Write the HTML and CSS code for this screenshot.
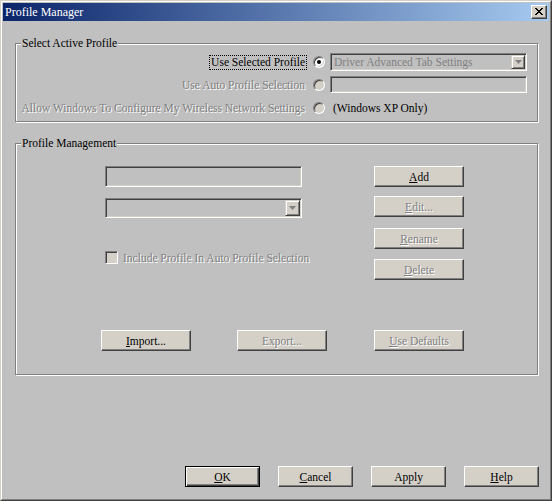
FILE: index.html
```html
<!DOCTYPE html>
<html>
<head>
<meta charset="utf-8">
<title>Profile Manager</title>
<link rel="stylesheet" href="styles.css">
</head>
<body>
<div class="window">
  <div class="frame">
    <div class="titlebar">
      <span class="title">Profile Manager</span>
      <span class="close"><svg width="8" height="7" viewBox="0 0 8 7"><path fill="#000" d="M0 0h2v1h-2zM6 0h2v1h-2zM1 1h2v1h-2zM5 1h2v1h-2zM2 2h4v1h-4zM3 3h2v1h-2zM2 4h4v1h-4zM1 5h2v1h-2zM5 5h2v1h-2zM0 6h2v1h-2zM6 6h2v1h-2z"/></svg></span>
    </div>
    <div class="client">
      <fieldset class="group g1">
        <legend>Select Active Profile</legend>
        <div class="opt-row r1">
          <div class="lbl"><span class="focus">Use Selected Profile</span></div>
          <div class="rcell"><span class="radio on"><span class="dot"></span></span></div>
          <div class="combo c1"><span class="val">Driver Advanced Tab Settings</span><span class="arrow"><svg width="7" height="4" viewBox="0 0 7 4"><path fill="#808080" d="M0 0h7l-3.5 4z"/></svg></span></div>
        </div>
        <div class="opt-row r2">
          <div class="lbl dis">Use Auto Profile Selection</div>
          <div class="rcell"><span class="radio"></span></div>
          <div class="edit e1"></div>
        </div>
        <div class="opt-row r3">
          <div class="lbl dis">Allow Windows To Configure My Wireless Network Settings</div>
          <div class="rcell"><span class="radio"></span></div>
          <div class="note">(Windows XP Only)</div>
        </div>
      </fieldset>

      <fieldset class="group g2">
        <legend>Profile Management</legend>
        <div class="pm-body">
          <div class="pm-left">
            <div class="edit e2"></div>
            <div class="combo c2"><span class="val"></span><span class="arrow"><svg width="7" height="4" viewBox="0 0 7 4"><path fill="#808080" d="M0 0h7l-3.5 4z"/></svg></span></div>
            <div class="check-row"><span class="checkbox"></span><span class="dis">Include Profile In Auto Profile Selection</span></div>
          </div>
          <div class="pm-right">
            <button class="btn b-add"><span><u>A</u>dd</span></button>
            <button class="btn b-edit dis"><span><u>E</u>dit...</span></button>
            <button class="btn b-rename dis"><span><u>R</u>ename</span></button>
            <button class="btn b-delete dis"><span><u>D</u>elete</span></button>
          </div>
        </div>
        <div class="pm-bottom">
          <button class="btn b-import"><span><u>I</u>mport...</span></button>
          <button class="btn b-export dis"><span>Export...</span></button>
          <button class="btn b-defaults dis"><span><u>U</u>se Defaults</span></button>
        </div>
      </fieldset>

      <div class="footer">
        <button class="btn fbtn default"><span><u>O</u>K</span></button>
        <button class="btn fbtn"><span><u>C</u>ancel</span></button>
        <button class="btn fbtn"><span>Apply</span></button>
        <button class="btn fbtn"><span><u>H</u>elp</span></button>
      </div>
    </div>
  </div>
</div>
</body>
</html>
```

FILE: styles.css
```css
* { box-sizing: border-box; }

html, body {
  margin: 0;
  padding: 0;
  background: #c0c0c0;
}

body {
  font-family: "Liberation Serif", "Times New Roman", serif;
  font-size: 11.5px;
  color: #000;
}

.window {
  width: 552px;
  height: 501px;
  border: 1px solid;
  border-color: #d4d0c8 #404040 #404040 #d4d0c8;
  background: #c0c0c0;
}

.frame {
  height: 100%;
  border: 1px solid;
  border-color: #fff #808080 #808080 #fff;
  padding: 1px;
  display: flex;
  flex-direction: column;
}

.titlebar {
  height: 18px;
  flex: none;
  background: linear-gradient(to right, #0a246a, #a6caf0);
  display: flex;
  align-items: center;
  padding: 0 2px 0 2px;
}

.title {
  flex: 1;
  color: #fff;
  font-size: 12px;
  line-height: 18px;
  white-space: nowrap;
}

.close {
  width: 16px;
  height: 14px;
  background: #d4d0c8;
  border: 1px solid;
  border-color: #fff #404040 #404040 #fff;
  box-shadow: inset -1px -1px 0 #808080;
  display: flex;
  align-items: center;
  justify-content: center;
  padding-bottom: 1px;
}

.close svg { display: block; }

.client {
  flex: 1;
  padding: 0 10px 0 12px;
}

.group {
  margin: 0;
  width: 523px;
  min-width: 0;
  border: 1px solid #808080;
  box-shadow: inset 1px 1px 0 #fff, 1px 1px 0 #fff;
}

.group legend {
  margin-left: 5px;
  padding: 0 1px;
  line-height: 13px;
  background: #c0c0c0;
  white-space: nowrap;
}

.g1 {
  margin-top: 16px;
  padding: 3px 0 5px 0;
}

.g2 {
  margin-top: 15px;
  padding: 16px 0 23px 0;
}

/* --- Select Active Profile rows --- */
.opt-row {
  display: flex;
  align-items: center;
}

.r1 { height: 18px; }
.r2 { height: 17px; margin-top: 5px; }
.r3 { height: 17px; margin-top: 6px; }

.lbl {
  width: 291px;
  flex: none;
  text-align: right;
  white-space: nowrap;
  padding-right: 2px;
}

.r1 .lbl { padding-right: 0; }

.focus {
  display: inline-block;
  border: 1px dotted #000;
  padding: 0 1px;
  line-height: 13px;
}

.dis {
  color: #808080;
  text-shadow: 1px 1px 0 #fff;
}

.rcell {
  width: 23px;
  flex: none;
  display: flex;
  align-items: center;
}

.radio {
  width: 12px;
  height: 12px;
  margin-left: 6px;
  border-radius: 50%;
  border: 1px solid;
  border-color: #808080 #fff #fff #808080;
  box-shadow: inset 1px 1px 0 #404040, inset -1px -1px 0 #d4d0c8;
  background: #d4d0c8;
  display: flex;
  align-items: center;
  justify-content: center;
}

.radio.on { background: #fff; }

.dot {
  width: 4px;
  height: 4px;
  border-radius: 50%;
  background: #000;
}

.combo, .edit {
  border: 1px solid;
  border-color: #808080 #fff #fff #808080;
  box-shadow: inset 1px 1px 0 #404040, inset -1px -1px 0 #d4d0c8;
  background: #c0c0c0;
}

.combo {
  display: flex;
  padding: 1px;
}

.combo .val {
  flex: 1;
  padding-left: 2px;
  color: #808080;
  line-height: 14px;
  white-space: nowrap;
}

.combo .arrow {
  flex: none;
  width: 14px;
  background: #d4d0c8;
  border: 1px solid;
  border-color: #d4d0c8 #404040 #404040 #d4d0c8;
  box-shadow: inset 1px 1px 0 #fff, inset -1px -1px 0 #808080;
  display: flex;
  align-items: center;
  justify-content: center;
}

.combo .arrow svg { display: block; }

.c1 { width: 197px; height: 18px; }
.e1 { width: 197px; height: 17px; }

.note {
  margin-left: 3px;
  white-space: nowrap;
}

/* --- Profile Management --- */
.pm-body {
  display: flex;
  align-items: flex-start;
}

.pm-left {
  margin-left: 89px;
  width: 197px;
  flex: none;
}

.e2 { width: 197px; height: 21px; }

.c2 {
  width: 197px;
  height: 20px;
  margin-top: 11px;
}

.c2 .arrow { width: 15px; }

.check-row {
  margin-top: 33px;
  height: 13px;
  display: flex;
  align-items: center;
  white-space: nowrap;
}

.checkbox {
  width: 13px;
  height: 13px;
  flex: none;
  border: 1px solid;
  border-color: #808080 #fff #fff #808080;
  box-shadow: inset 1px 1px 0 #404040, inset -1px -1px 0 #d4d0c8;
  background: #d4d0c8;
  margin-right: 5px;
}

.pm-right {
  margin-left: 72px;
  width: 90px;
  flex: none;
  display: flex;
  flex-direction: column;
}

.btn {
  font-family: inherit;
  font-size: inherit;
  color: #000;
  width: 90px;
  height: 21px;
  padding: 0;
  margin: 0;
  background: #d4d0c8;
  border: 1px solid;
  border-color: #fff #404040 #404040 #fff;
  box-shadow: inset -1px -1px 0 #808080;
  display: flex;
  align-items: center;
  justify-content: center;
  white-space: nowrap;
}

.btn.dis {
  color: #808080;
  text-shadow: 1px 1px 0 #fff;
}

.btn u { text-underline-offset: 1px; }

.b-edit { margin-top: 9px; }
.b-rename { margin-top: 11px; }
.b-delete { margin-top: 10px; }

.pm-bottom {
  margin-top: 50px;
  display: flex;
}

.b-import { margin-left: 85px; }
.b-export { margin-left: 46px; }
.b-defaults { margin-left: 47px; }

/* --- Footer --- */
.footer {
  margin-top: 91px;
  display: flex;
  justify-content: flex-end;
  gap: 18px;
}

.fbtn { width: 75px; }

.fbtn.default {
  border: 1px solid #000;
  box-shadow: inset 1px 1px 0 #fff, inset -1px -1px 0 #404040, inset -2px -2px 0 #808080;
}
```
